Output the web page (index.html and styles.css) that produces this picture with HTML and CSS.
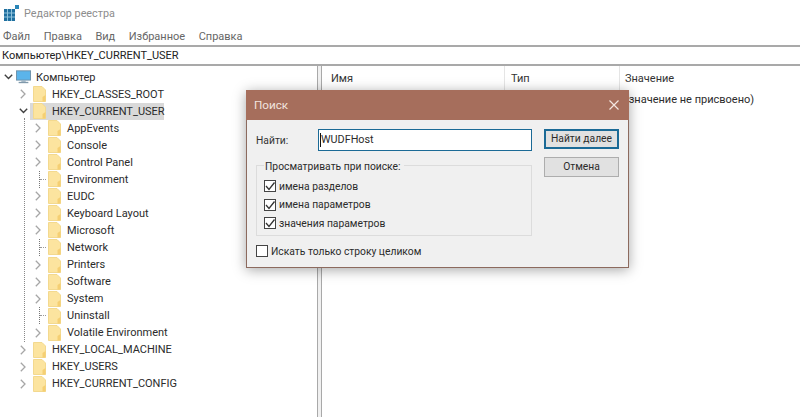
FILE: index.html
```html
<!DOCTYPE html>
<html lang="ru">
<head>
  <meta charset="UTF-8">
  <title>Редактор реестра</title>
  <link rel="stylesheet" href="styles.css">
</head>
<body>
  <svg class="sprites" width="0" height="0">
    <symbol id="folder" viewBox="0 0 13 16">
      <path d="M.5 .5H9L12.500 4V15.500H.5Z" fill="#fce49f" stroke="#f3d98f"/>
      <path d="M9.500 15.500V11L12.500 9V15.500Z" fill="#f5cf73"/>
    </symbol>
    <symbol id="chev-r" viewBox="0 0 6 10"><path d="M.8 .8L5 5L.8 9.200" fill="none" stroke="#a6a6a6" stroke-width="1.300"/></symbol>
    <symbol id="chev-d" viewBox="0 0 9 6"><path d="M.8 .8L4.500 4.500L8.200 .8" fill="none" stroke="#404040" stroke-width="1.400"/></symbol>
    <symbol id="tick" viewBox="0 0 12 12"><path d="M2 6L5 9.500L10.500 2.500" fill="none" stroke="#333" stroke-width="1.300"/></symbol>
  </svg>

  <div class="titlebar">
    <svg class="app-icon" width="16" height="16" viewBox="0 0 16 16">
      <rect x="0" y="4" width="11" height="12" fill="#1f6f9f"/>
      <path d="M3.500 4V16M7.500 4V16M0 8H11M0 12H11" stroke="#8fc3dc" stroke-width="1"/>
      <rect x="11" y="0" width="4" height="4" fill="#2a86b8"/>
    </svg>
    <span>Редактор реестра</span>
  </div>

  <nav class="menubar">
    <span>Файл</span><span>Правка</span><span>Вид</span><span>Избранное</span><span>Справка</span>
  </nav>

  <div class="address">Компьютер\HKEY_CURRENT_USER</div>

  <div class="panes">
    <div class="tree">
      <div class="guide"></div>

      <div class="row root">
        <svg class="chev-open" width="9" height="6"><use href="#chev-d"/></svg>
        <svg class="monitor" width="15" height="14" viewBox="0 0 17 15">
          <rect x=".5" y=".5" width="16" height="10.500" fill="#5bb4ea" stroke="#6b8da5"/>
          <rect x="6" y="11" width="5" height="2" fill="#9db4c4"/>
          <rect x="3" y="13" width="11" height="1.500" fill="#7f98aa"/>
        </svg>
        <span class="label">Компьютер</span>
      </div>

      <div class="row lvl1"><svg class="chev" width="6" height="10"><use href="#chev-r"/></svg><svg class="folder" width="13" height="16"><use href="#folder"/></svg><span class="label">HKEY_CLASSES_ROOT</span></div>
      <div class="row lvl1 selected"><svg class="chev-open" width="9" height="6"><use href="#chev-d"/></svg><svg class="folder" width="13" height="16"><use href="#folder"/></svg><span class="label">HKEY_CURRENT_USER</span></div>

      <div class="row lvl2"><svg class="chev" width="6" height="10"><use href="#chev-r"/></svg><svg class="folder" width="13" height="16"><use href="#folder"/></svg><span class="label">AppEvents</span></div>
      <div class="row lvl2"><svg class="chev" width="6" height="10"><use href="#chev-r"/></svg><svg class="folder" width="13" height="16"><use href="#folder"/></svg><span class="label">Console</span></div>
      <div class="row lvl2"><svg class="chev" width="6" height="10"><use href="#chev-r"/></svg><svg class="folder" width="13" height="16"><use href="#folder"/></svg><span class="label">Control Panel</span></div>
      <div class="row lvl2"><i class="leaf"></i><svg class="folder" width="13" height="16"><use href="#folder"/></svg><span class="label">Environment</span></div>
      <div class="row lvl2"><svg class="chev" width="6" height="10"><use href="#chev-r"/></svg><svg class="folder" width="13" height="16"><use href="#folder"/></svg><span class="label">EUDC</span></div>
      <div class="row lvl2"><svg class="chev" width="6" height="10"><use href="#chev-r"/></svg><svg class="folder" width="13" height="16"><use href="#folder"/></svg><span class="label">Keyboard Layout</span></div>
      <div class="row lvl2"><svg class="chev" width="6" height="10"><use href="#chev-r"/></svg><svg class="folder" width="13" height="16"><use href="#folder"/></svg><span class="label">Microsoft</span></div>
      <div class="row lvl2"><i class="leaf"></i><svg class="folder" width="13" height="16"><use href="#folder"/></svg><span class="label">Network</span></div>
      <div class="row lvl2"><svg class="chev" width="6" height="10"><use href="#chev-r"/></svg><svg class="folder" width="13" height="16"><use href="#folder"/></svg><span class="label">Printers</span></div>
      <div class="row lvl2"><svg class="chev" width="6" height="10"><use href="#chev-r"/></svg><svg class="folder" width="13" height="16"><use href="#folder"/></svg><span class="label">Software</span></div>
      <div class="row lvl2"><svg class="chev" width="6" height="10"><use href="#chev-r"/></svg><svg class="folder" width="13" height="16"><use href="#folder"/></svg><span class="label">System</span></div>
      <div class="row lvl2"><i class="leaf"></i><svg class="folder" width="13" height="16"><use href="#folder"/></svg><span class="label">Uninstall</span></div>
      <div class="row lvl2"><svg class="chev" width="6" height="10"><use href="#chev-r"/></svg><svg class="folder" width="13" height="16"><use href="#folder"/></svg><span class="label">Volatile Environment</span></div>

      <div class="row lvl1"><svg class="chev" width="6" height="10"><use href="#chev-r"/></svg><svg class="folder" width="13" height="16"><use href="#folder"/></svg><span class="label">HKEY_LOCAL_MACHINE</span></div>
      <div class="row lvl1"><svg class="chev" width="6" height="10"><use href="#chev-r"/></svg><svg class="folder" width="13" height="16"><use href="#folder"/></svg><span class="label">HKEY_USERS</span></div>
      <div class="row lvl1"><svg class="chev" width="6" height="10"><use href="#chev-r"/></svg><svg class="folder" width="13" height="16"><use href="#folder"/></svg><span class="label">HKEY_CURRENT_CONFIG</span></div>
    </div>

    <div class="splitter"></div>

    <div class="values">
      <div class="values-head">
        <span class="col col-name">Имя</span>
        <span class="col col-type">Тип</span>
        <span class="col col-value">Значение</span>
      </div>
      <div class="values-row">(значение не присвоено)</div>
    </div>
  </div>

  <div class="dialog">
    <div class="dialog-title">
      <span>Поиск</span>
      <svg width="10" height="10" viewBox="0 0 10 10"><path d="M.5 .5L9.500 9.500M9.500 .5L.5 9.500" stroke="#f3e6e1" stroke-width="1.200"/></svg>
    </div>
    <div class="dialog-body">
      <div class="dialog-main">
        <div class="find-line">
          <span class="find-label">Найти:</span>
          <div class="find-input"><i class="caret"></i>WUDFHost</div>
        </div>
        <fieldset class="scope">
          <legend>Просматривать при поиске:</legend>
          <div class="check"><span class="box"><svg width="12" height="12"><use href="#tick"/></svg></span>имена разделов</div>
          <div class="check"><span class="box"><svg width="12" height="12"><use href="#tick"/></svg></span>имена параметров</div>
          <div class="check"><span class="box"><svg width="12" height="12"><use href="#tick"/></svg></span>значения параметров</div>
        </fieldset>
        <div class="check whole"><span class="box"></span>Искать только строку целиком</div>
      </div>
      <div class="dialog-buttons">
        <div class="btn btn-default">Найти далее</div>
        <div class="btn">Отмена</div>
      </div>
    </div>
  </div>
</body>
</html>
```

FILE: styles.css
```css
* {
  margin: 0;
  padding: 0;
  box-sizing: border-box;
}

html, body {
  height: 100%;
  overflow: hidden;
}

body {
  background: #fff;
  color: #2b2b2b;
  font-family: Roboto, sans-serif;
  font-size: 11px;
  position: relative;
}

.sprites {
  position: absolute;
}

.titlebar {
  height: 26px;
  display: flex;
  align-items: center;
  padding-left: 4px;
  color: #8d8d8d;
  font-size: 10.8px;
}

.app-icon {
  margin-right: 4px;
}

.menubar {
  height: 21px;
  display: flex;
  align-items: center;
  gap: 13.500px;
  padding-left: 3px;
  padding-top: 2px;
  color: #666;
  border-bottom: 2px solid #a9a9a9;
}

.address {
  height: 19px;
  line-height: 18px;
  padding-left: 2px;
  color: #222;
  border-bottom: 2px solid #a9a9a9;
}

.panes {
  display: flex;
  height: 351px;
}

.tree {
  width: 317px;
  padding-top: 2.500px;
  position: relative;
}

.row {
  height: 17.050px;
  display: flex;
  align-items: center;
  position: relative;
}

.root { padding-left: 5px; }
.lvl1 { padding-left: 20px; }
.lvl2 { padding-left: 35px; }

.row.selected {
  background: linear-gradient(#d9d9d9, #d9d9d9) 30px 0 / 134px 17px no-repeat;
}

.chev {
  flex: none;
  margin-right: 7px;
}

.chev-open {
  flex: none;
  margin-left: -1px;
  margin-right: 5px;
}

.monitor {
  flex: none;
  margin-left: -2px;
  margin-right: 5px;
}

.folder {
  flex: none;
  margin-right: 6px;
}

.leaf {
  width: 9px;
  height: 17px;
  margin-left: 4px;
  border-left: 1px dotted #777;
  display: flex;
  align-items: center;
}

.leaf::after {
  content: "";
  width: 6px;
  border-top: 1px dotted #999;
}

.guide {
  position: absolute;
  left: 24px;
  top: 52px;
  height: 224px;
  border-left: 1px dotted #888;
}

.splitter {
  width: 5px;
  background: #f0f0f0;
  border-left: 1px solid #a9a9a9;
  border-right: 1px solid #a9a9a9;
}

.values {
  flex: 1;
}

.values-head {
  height: 25px;
  display: flex;
  align-items: center;
  color: #333;
}

.col {
  height: 100%;
  display: flex;
  align-items: center;
  border-right: 1px solid #e5e5e5;
}

.col-name {
  width: 183px;
  padding-left: 9px;
}

.col-type {
  width: 115px;
  padding-left: 6px;
}

.col-value {
  padding-left: 5px;
  border-right: none;
}

.values-row {
  padding-left: 303px;
  line-height: 18px;
}

.dialog {
  position: absolute;
  left: 246px;
  top: 90px;
  width: 383px;
  height: 178px;
  background: #f0f0f0;
  border: 1px solid #8c6a5e;
  border-top: none;
  font-size: 10.3px;
  box-shadow: 0 2px 12px rgba(0, 0, 0, 0.35);
}

.dialog-title {
  height: 30px;
  margin: 0 -1px;
  padding: 0 10px 0 8px;
  background: #a66e5c;
  color: #f1e4df;
  font-size: 11.700px;
  display: flex;
  align-items: center;
  justify-content: space-between;
}

.dialog-body {
  display: flex;
  padding: 9px 9px 0 9px;
}

.dialog-main {
  width: 277px;
}

.find-line {
  display: flex;
  align-items: center;
  height: 22px;
}

.find-label {
  width: 62px;
  color: #333;
}

.find-input {
  width: 214px;
  height: 22px;
  line-height: 19px;
  padding-left: 2px;
  background: #fff;
  border: 1px solid #1b6a96;
  font-size: 10.800px;
  position: relative;
}

.caret {
  position: absolute;
  left: 1px;
  top: 3px;
  height: 14px;
  border-left: 1px solid #111;
}

.scope {
  width: 276px;
  height: 80px;
  margin-top: 5px;
  padding: 3px 0 0 7px;
  border: 1px solid #dcdcdc;
}

.scope legend {
  padding: 4px 3px 0 1px;
  line-height: 14px;
}

.check {
  height: 18.500px;
  display: flex;
  align-items: center;
}

.box {
  width: 12px;
  height: 12px;
  flex: none;
  margin-right: 3px;
  background: #fff;
  border: 1px solid #444;
  display: flex;
}

.box svg {
  margin: -1px;
}

.whole {
  margin-top: 6px;
}

.dialog-buttons {
  display: flex;
  flex-direction: column;
  gap: 8px;
  margin-left: 12px;
}

.btn {
  width: 75px;
  height: 20px;
  line-height: 18px;
  text-align: center;
  background: #e1e1e1;
  border: 1px solid #adadad;
}

.btn-default {
  border: 2px solid #1b6a96;
  line-height: 16px;
}
```
